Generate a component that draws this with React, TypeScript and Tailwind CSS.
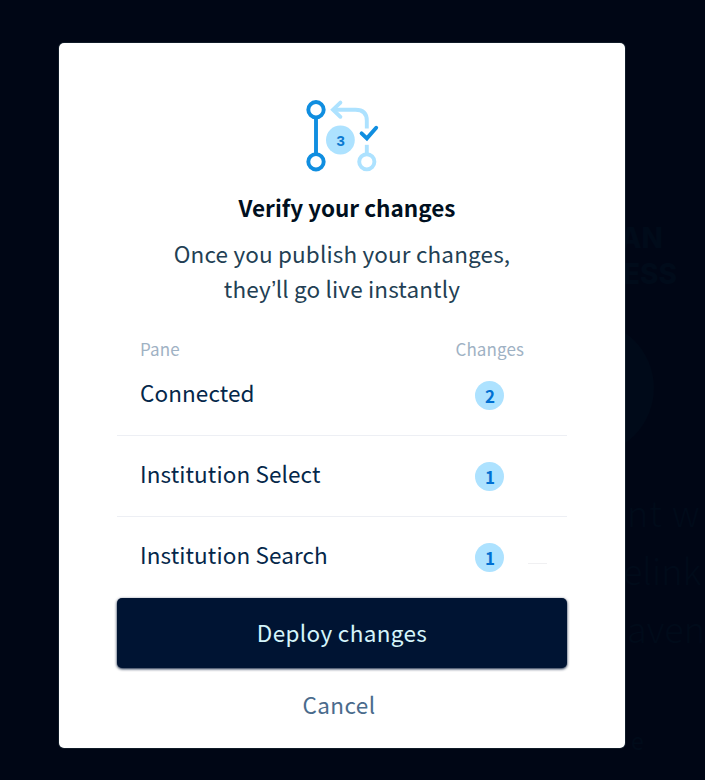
const rows = [
  { pane: 'Connected', changes: 2 },
  { pane: 'Institution Select', changes: 1 },
  { pane: 'Institution Search', changes: 1 },
];

function BranchIcon() {
  return (
    <svg width="105" height="100" viewBox="290 85 105 100" fill="none" strokeWidth="3.9" className="block">
      <g stroke="#ade2ff">
        <path d="M333 109.7H355.5Q366.8 109.7 366.8 120.5V128.5" />
        <path d="M340.4 102.6L333 109.7L340.4 116.8" strokeLinecap="round" />
        <path d="M366.8 144.8V154" />
        <circle cx="366.8" cy="161.8" r="7.6" />
      </g>
      <g stroke="#108ee0">
        <circle cx="316" cy="109.7" r="7.7" />
        <circle cx="316" cy="161.8" r="7.7" />
        <path d="M316 117.4V154" />
        <path d="M361.6 133.3L366.9 138.4L376.2 127.8" strokeLinecap="round" />
      </g>
      <circle cx="340.4" cy="140" r="14.4" fill="#ade2ff" />
      <text x="340.6" y="145.6" textAnchor="middle" fill="#0b79d0" fontSize="15" className="font-['Liberation_Sans',sans-serif] font-bold">3</text>
    </svg>
  );
}

function Backdrop() {
  return (
    <div aria-hidden="true" className="absolute inset-0 overflow-hidden text-[#000b1a]">
      <div className="absolute left-[520px] top-[321px] size-[134px] rounded-full bg-[#000a19]" />
      <div className="absolute right-[42px] top-[220px] text-right font-['Inter'] text-[28px] leading-[36px] font-extrabold">AN</div>
      <div className="absolute right-[28px] top-[256px] text-right font-['Inter'] text-[28px] leading-[36px] font-extrabold">ESS</div>
      <div className="absolute left-[627px] top-[482px] text-[36px] leading-[58px] font-light whitespace-nowrap">
        <div className="tracking-[1px]">nt w</div>
        <div className="-ml-1">elink</div>
        <div>aven</div>
      </div>
      <div className="absolute left-[631px] top-[725px] text-[23px] leading-[30px]">e</div>
    </div>
  );
}

export default function App() {
  return (
    <main className="relative h-[780px] w-[705px] overflow-hidden bg-[#000615] pt-[43px] pl-[59px] font-['Noto_Sans_CJK_SC','Noto_Sans',sans-serif]">
      <Backdrop />
      <section className="relative flex h-[705px] w-[566px] flex-col rounded-[5px] bg-white px-[58px] pt-[42px] ring-1 ring-[#1b2935]/60">
        <div className="flex justify-center">
          <BranchIcon />
        </div>
        <h1 className="mt-[7px] pl-[10px] text-center text-[22.5px] leading-[30px] font-bold whitespace-nowrap text-[#000f20]">Verify your changes</h1>
        <p className="mt-[14px] h-[69px] text-center text-[22.5px] leading-[34.5px] tracking-[0.15px] whitespace-nowrap text-[#233f54]">
          Once you publish your changes,
          <br />
          they<span className="font-['Liberation_Sans',sans-serif] text-[24px] leading-none tracking-[-0.5px]">’</span>ll go live instantly
        </p>
        <div className="mt-[32px] flex h-[24px] items-center justify-between pr-[43px] pb-px pl-[23px] text-[17px] leading-[24px] tracking-[0.1px] text-[#9fb2c4]">
          <span>Pane</span>
          <span>Changes</span>
        </div>
        <ul className="-mt-[6px] divide-y divide-[#edeff4]">
          {rows.map((row) => (
            <li key={row.pane} className="flex h-[81px] items-center justify-between pr-[63px] pl-[23px] last:h-[80px]">
              <span className="mb-[6px] text-[22.5px] leading-[30px] tracking-[0.1px] text-[#04274a]">{row.pane}</span>
              <span className="mt-[1px] flex size-[29px] items-center justify-center rounded-full bg-[#ade2ff] pl-[1px] text-[17px] leading-[29px] font-bold text-[#0070d2]">
                {row.changes}
              </span>
            </li>
          ))}
        </ul>
        <div className="absolute top-[520px] left-[469px] h-px w-[19px] bg-[#f0f0f2]" />
        <button className="mt-[1px] h-[70px] shrink-0 rounded-[5px] bg-[#001433] text-[22.5px] tracking-[0.35px] text-[#d5f5fb] shadow-[0_1px_3px_#001433]">Deploy changes</button>
        <button className="mt-[19px] pr-[6px] text-center text-[22.5px] leading-[34px] tracking-[0.4px] text-[#4a6b8c]">Cancel</button>
      </section>
    </main>
  );
}
